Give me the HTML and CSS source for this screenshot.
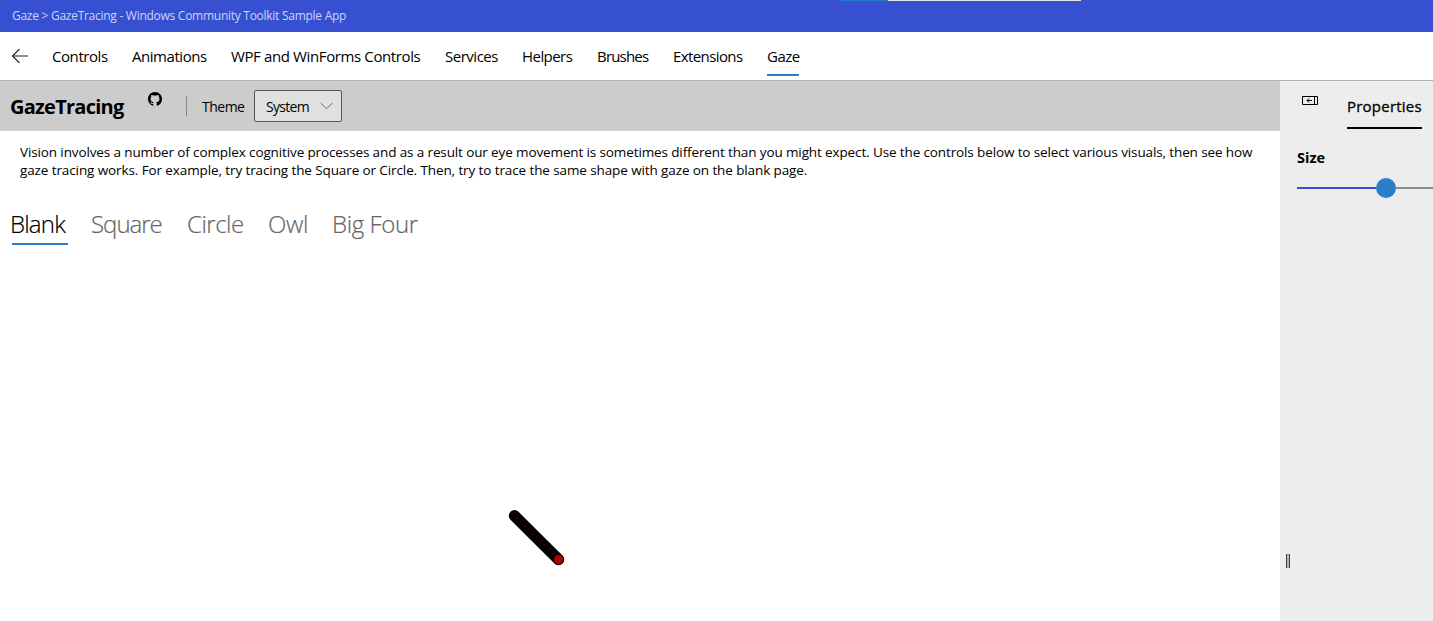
FILE: index.html
```html
<!DOCTYPE html>
<html lang="en">
<head>
<meta charset="utf-8">
<title>GazeTracing</title>
<link rel="stylesheet" href="styles.css">
</head>
<body>
<div class="app">
  <header class="titlebar"><span class="title-text">Gaze &gt; GazeTracing - Windows Community Toolkit Sample App</span><i class="edge-strip"></i></header>
  <nav class="nav">
    <svg class="back" width="18" height="16" viewBox="0 0 18 16"><path d="M17 8H1.5M8.500 1L1.500 8l7 7" fill="none" stroke="#222" stroke-width="1.1"/></svg>
    <a class="nav-item n-controls">Controls</a>
    <a class="nav-item n-animations">Animations</a>
    <a class="nav-item n-wpf">WPF and WinForms Controls</a>
    <a class="nav-item n-services">Services</a>
    <a class="nav-item n-helpers">Helpers</a>
    <a class="nav-item n-brushes">Brushes</a>
    <a class="nav-item n-extensions">Extensions</a>
    <a class="nav-item n-gaze active">Gaze</a>
  </nav>
  <div class="body">
    <main class="main">
      <div class="toolbar">
        <h1 class="heading">GazeTracing</h1>
        <svg class="github" width="14" height="14" viewBox="0 0 16 16"><path d="M8 0C3.58 0 0 3.58 0 8c0 3.54 2.29 6.53 5.47 7.59.4.07.55-.17.55-.38 0-.19-.01-.82-.01-1.49-2.01.37-2.53-.49-2.69-.94-.09-.23-.48-.94-.82-1.13-.28-.15-.68-.52-.01-.53.63-.01 1.08.58 1.23.82.72 1.21 1.87.87 2.33.66.07-.52.28-.87.51-1.07-1.78-.2-3.64-.89-3.64-3.95 0-.87.31-1.59.82-2.15-.08-.2-.36-1.02.08-2.12 0 0 .67-.21 2.2.82A7.6 7.6 0 0 1 8 3.86c.68 0 1.36.09 2 .27 1.53-1.04 2.2-.82 2.2-.82.44 1.1.16 1.92.08 2.12.51.56.82 1.27.82 2.15 0 3.07-1.87 3.75-3.65 3.95.29.25.54.73.54 1.48 0 1.07-.01 1.93-.01 2.2 0 .21.15.46.55.38A8.01 8.01 0 0 0 16 8c0-4.42-3.58-8-8-8z"/></svg>
        <i class="divider"></i>
        <span class="theme">Theme</span>
        <div class="select"><span class="select-text">System</span><svg width="13" height="8" viewBox="0 0 13 8"><path d="M.7 1l5.8 5.8L12.3 1" fill="none" stroke="#666" stroke-width="1"/></svg></div>
      </div>
      <p class="intro"><span class="line l1">Vision involves a number of complex cognitive processes and as a result our eye movement is sometimes different than you might expect. Use the controls below to select various visuals, then see how</span> <span class="line l2">gaze tracing works. For example, try tracing the Square or Circle. Then, try to trace the same shape with gaze on the blank page.</span></p>
      <div class="tabs">
        <span class="tab t-blank active">Blank</span>
        <span class="tab t-square">Square</span>
        <span class="tab t-circle">Circle</span>
        <span class="tab t-owl">Owl</span>
        <span class="tab t-big">Big Four</span>
      </div>
      <svg class="trace" width="60" height="60" viewBox="507 507 60 60">
        <path d="M514.5 515.7L558.5 559.5" stroke="#000" stroke-width="11.4" stroke-linecap="round"/>
        <path d="M513 513.5L554 554.5" stroke="#600000" stroke-width="4" stroke-dasharray="1 4.600" opacity=".8"/>
        <circle cx="558.6" cy="559.5" r="5" fill="#b40000" stroke="#000" stroke-width="1"/>
      </svg>
    </main>
    <aside class="side">
      <div class="side-head">
        <svg class="dock" width="16" height="9" viewBox="0 0 16 9"><path d="M.5.5h15v8H.5zM12.5 .5v8M5 4.500h5M7 2.500l-2 2 2 2" fill="none" stroke="#000" stroke-width="1"/></svg>
        <span class="props">Properties</span>
      </div>
      <div class="size">Size</div>
      <div class="slider"><i class="fill"></i><i class="thumb"></i><i class="rest"></i></div>
      <i class="grip"></i>
    </aside>
  </div>
</div>
</body>
</html>
```
FILE: styles.css
```css
* { box-sizing: border-box; }
body { margin: 0; font-family: "Open Sans", "Noto Sans", sans-serif; color: #000; background: #fff; }
.app { width: 1433px; height: 621px; display: flex; flex-direction: column; overflow: hidden; }
.titlebar { position: relative; height: 32px; flex: none; padding-left: 12px; background: #374fd1; color: #ced4f3; font-size: 12px; line-height: 31px; white-space: nowrap; letter-spacing: -.27px; }
.edge-strip { position: absolute; left: 840px; top: 0; width: 241px; height: 1px; background: linear-gradient(90deg, #2377cc 48px, #e4e4e4 48px); }
.nav { height: 49px; flex: none; display: flex; padding-left: 11px; border-bottom: 1px solid #b2b2b2; font-size: 15px; line-height: 20px; white-space: nowrap; }
.back { flex: none; margin: 16px 23px 0 0; }
.nav-item { flex: none; height: 44px; padding-top: 14px; }
.nav-item.active { border-bottom: 2px solid #2a7fca; }
.n-controls { width: 56px; margin-right: 24px; letter-spacing: -.43px; }
.n-animations { width: 75px; margin-right: 24px; letter-spacing: -.45px; }
.n-wpf { width: 190px; margin-right: 24px; letter-spacing: -.38px; }
.n-services { width: 53px; margin-right: 24px; letter-spacing: -.48px; }
.n-helpers { width: 51px; margin-right: 24px; letter-spacing: -.55px; }
.n-brushes { width: 52px; margin-right: 24px; letter-spacing: -.8px; }
.n-extensions { width: 70px; margin-right: 24px; letter-spacing: -.6px; }
.n-gaze { width: 32px; letter-spacing: -.5px; }
.body { flex: 1; display: flex; min-height: 0; }
.main { width: 1280px; flex: none; }
.toolbar { height: 50px; display: flex; background: #ccc; padding-left: 10px; white-space: nowrap; }
.heading { width: 138px; margin: 12px 0 0; font-size: 20px; line-height: 28px; font-weight: 700; letter-spacing: -.75px; }
.github { margin-top: 11px; }
.divider { width: 1px; height: 20px; margin: 15px 15px 0 24px; background: #858585; }
.theme { width: 52px; margin-top: 16px; font-size: 14px; line-height: 20px; letter-spacing: -.5px; }
.select { width: 88px; height: 32px; margin-top: 9px; padding: 0 8px 0 11px; display: flex; align-items: center; justify-content: space-between; border: 1px solid #555; border-radius: 2px; background: #e0e0e0; font-size: 14px; }
.select-text { letter-spacing: -.7px; }
.intro { height: 76px; margin: 0; padding: 12px 0 0 20px; font-size: 13.5px; line-height: 18px; white-space: nowrap; }
.line { display: block; }
.l1 { letter-spacing: -.122px; }
.l2 { letter-spacing: -.105px; }
.tabs { height: 38px; display: flex; padding-left: 10px; font-size: 24px; line-height: 32px; font-weight: 300; white-space: nowrap; color: #666; -webkit-text-stroke: .2px; }
.tab { height: 38px; padding-top: 1px; }
.tab.active { color: #000; background: linear-gradient(#2a7fca, #2a7fca) 2px 36px / 56px 2px no-repeat; }
.t-blank { width: 81px; letter-spacing: -.8px; }
.t-square { width: 96px; letter-spacing: -1px; }
.t-circle { width: 81px; letter-spacing: -.5px; }
.t-owl { width: 64px; letter-spacing: -.3px; }
.t-big { letter-spacing: -.4px; }
.trace { display: block; margin: 262px 0 0 507px; }
.side { flex: 1; position: relative; overflow: hidden; padding-left: 17px; background: #ededed; white-space: nowrap; }
.side-head { display: flex; padding-left: 5px; }
.dock { flex: none; margin: 15px 29px 0 0; }
.props { width: 75px; height: 48px; padding-top: 15px; border-bottom: 2px solid #000; font-size: 15px; font-weight: 500; line-height: 21px; letter-spacing: .22px; -webkit-text-stroke: .3px; }
.size { margin-top: 18px; font-size: 14.5px; font-weight: 700; line-height: 22px; }
.slider { display: flex; align-items: center; height: 20px; margin-top: 9px; }
.fill { width: 79px; height: 2px; background: #374fd1; }
.thumb { width: 20px; height: 20px; border-radius: 50%; background: #2a7fca; }
.rest { flex: 1; height: 2px; background: #8d8d8d; }
.grip { display: block; width: 4px; height: 14px; margin: 356px 0 0 -11px; border: solid #3c3c3c; border-width: 0 1px; background: #b5b5b5; }
```
